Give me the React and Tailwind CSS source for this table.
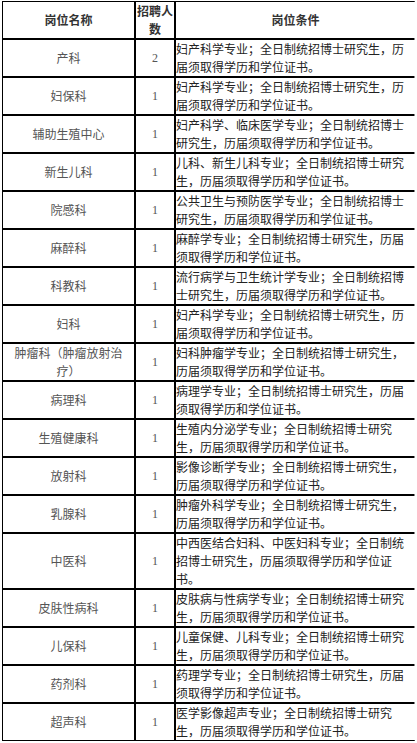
import React from "react";

const rows = [
  ["产科", "2", "妇产科学专业；全日制统招博士研究生，历届须取得学历和学位证书。"],
  ["妇保科", "1", "妇产科学专业；全日制统招博士研究生，历届须取得学历和学位证书。"],
  ["辅助生殖中心", "1", "妇产科学、临床医学专业；全日制统招博士研究生，历届须取得学历和学位证书。"],
  ["新生儿科", "1", "儿科、新生儿科专业；全日制统招博士研究生，历届须取得学历和学位证书。"],
  ["院感科", "1", "公共卫生与预防医学专业；全日制统招博士研究生，历届须取得学历和学位证书。"],
  ["麻醉科", "1", "麻醉学专业；全日制统招博士研究生，历届须取得学历和学位证书。"],
  ["科教科", "1", "流行病学与卫生统计学专业；全日制统招博士研究生，历届须取得学历和学位证书。"],
  ["妇科", "1", "妇产科学专业；全日制统招博士研究生，历届须取得学历和学位证书。"],
  ["肿瘤科（肿瘤放射治疗）", "1", "妇科肿瘤学专业；全日制统招博士研究生，历届须取得学历和学位证书。"],
  ["病理科", "1", "病理学专业；全日制统招博士研究生，历届须取得学历和学位证书。"],
  ["生殖健康科", "1", "生殖内分泌学专业；全日制统招博士研究生，历届须取得学历和学位证书。"],
  ["放射科", "1", "影像诊断学专业；全日制统招博士研究生，历届须取得学历和学位证书。"],
  ["乳腺科", "1", "肿瘤外科学专业；全日制统招博士研究生，历届须取得学历和学位证书。"],
  ["中医科", "1", "中西医结合妇科、中医妇科专业；全日制统招博士研究生，历届须取得学历和学位证书。"],
  ["皮肤性病科", "1", "皮肤病与性病学专业；全日制统招博士研究生，历届须取得学历和学位证书。"],
  ["儿保科", "1", "儿童保健、儿科专业；全日制统招博士研究生，历届须取得学历和学位证书。"],
  ["药剂科", "1", "药理学专业；全日制统招博士研究生，历届须取得学历和学位证书。"],
  ["超声科", "1", "医学影像超声专业；全日制统招博士研究生，历届须取得学历和学位证书。"],
];

export default function App() {
  return (
    <div
      className="bg-white w-[417px] h-[743px] pt-[1px] pl-[2px]"
      style={{ fontFamily: '"Noto Sans CJK SC", "Noto Sans", sans-serif' }}
    >
      <div className="w-[413px] grid grid-cols-[131px_38px_239px] gap-[2px] bg-black border-t border-l border-black border-r border-r-[#888] border-b text-[12px] leading-[18px]">
        {/* Header */}
        <div className="bg-white min-h-[36px] flex items-center justify-center font-bold text-[#333]">岗位名称</div>
        <div className="bg-white min-h-[36px] flex items-center justify-center text-center font-bold text-[#333]">招聘人数</div>
        <div className="bg-white min-h-[36px] flex items-center justify-center font-bold text-[#333]">岗位条件</div>

        {rows.map(([name, num, cond], i) => (
          <React.Fragment key={i}>
            <div className="bg-white min-h-[36px] px-[8px] flex items-center justify-center text-center text-[#555]">{name}</div>
            <div
              className="bg-white min-h-[36px] flex items-center justify-center text-[#555]"
              style={{ fontFamily: '"Liberation Serif", serif' }}
            >
              {num}
            </div>
            <div className="bg-white min-h-[36px] flex items-center text-[#222]">{cond}</div>
          </React.Fragment>
        ))}
      </div>
    </div>
  );
}
